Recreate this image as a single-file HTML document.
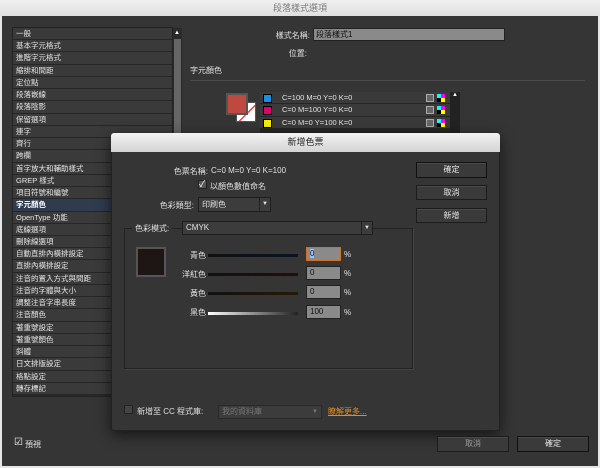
<!DOCTYPE html>
<html><head><meta charset="utf-8"><style>
*{margin:0;padding:0;box-sizing:border-box}
body{width:600px;height:468px;background:#e6e6e6;font-family:"Liberation Sans","Noto Sans CJK TC",sans-serif;font-size:8px;color:#e0e0e0;position:relative;overflow:hidden}
.a{position:absolute}
#win{left:2px;top:16px;width:596px;height:450px;background:#353535}
.list{left:12px;top:27px;width:161px;height:370px;background:#2a2a2a;border:1px solid #222}
.list div{height:12.24px;line-height:12px;padding-left:3px;border-bottom:1px solid #262626;background:#3a3a3a;color:#e6e6e6;font-size:7.5px;white-space:nowrap}
.list div.sel{background:#2f3b4f;color:#fff;font-weight:bold}
.btn{background:#3a3a3a;border:1px solid #1c1c1c;box-shadow:inset 0 1px 0 #4a4a4a;text-align:center;color:#e6e6e6;font-size:8px}
.r{text-align:right}
.row{height:12.3px;border-bottom:1px solid #262626;background:#3a3a3a;position:relative;font-size:7.5px;line-height:12px;padding-left:22px}
.row i{position:absolute;left:3px;top:2px;width:9px;height:9px;border:1px solid #000}
.row b{position:absolute;left:166px;top:2px;width:8px;height:8px;background:#666;border:1px solid #aaa}
.row u{position:absolute;left:177px;top:2px;width:8px;height:8px;background:conic-gradient(#f0f 0 25%,#ff0 0 50%,#000 0 75%,#0ff 0)}
.in{background:#8a8a8a;border:1px solid #222;color:#111}
.sl{height:3px}
</style></head><body>
<div class="a" style="left:0;top:0;width:600px;height:16px;background:linear-gradient(#f0f0f0,#e0e0e0);text-align:center;line-height:16px;color:#7a7a7a;font-size:9px">段落樣式選項</div>
<div class="a" id="win"></div>
<div class="a list">
<div>一般</div><div>基本字元格式</div><div>進階字元格式</div><div>縮排和間距</div><div>定位點</div><div>段落嵌線</div><div>段落陰影</div><div>保留選項</div><div>連字</div><div>齊行</div><div>跨欄</div><div>首字放大和輔助樣式</div><div>GREP 樣式</div><div>項目符號和編號</div><div class="sel">字元顏色</div><div>OpenType 功能</div><div>底線選項</div><div>刪除線選項</div><div>自動直排內橫排設定</div><div>直排內橫排設定</div><div>注音的置入方式與間距</div><div>注音的字體與大小</div><div>調整注音字串長度</div><div>注音顏色</div><div>著重號設定</div><div>著重號顏色</div><div>斜體</div><div>日文排版設定</div><div>格點設定</div><div>轉存標記</div>
</div>
<div class="a" style="left:173px;top:28px;width:9px;height:369px;background:#2a2a2a"><div style="margin:2px 1px;width:7px;height:6px;color:#fff;font-size:6px;line-height:6px">▲</div><div style="margin:3px 1px;width:7px;height:300px;background:#666"></div></div>

<div class="a r" style="left:240px;top:30px;width:70px">樣式名稱:</div>
<div class="a in" style="left:313px;top:28px;width:192px;height:13px;font-size:8px;line-height:11px;padding-left:2px">段落樣式1</div>
<div class="a r" style="left:240px;top:48px;width:67px">位置:</div>
<div class="a" style="left:190px;top:65px">字元顏色</div>
<div class="a" style="left:190px;top:80px;width:395px;height:1px;background:#4a4a4a"></div>
<div class="a" style="left:236px;top:102px;width:20px;height:20px;background:#fff;border:1px solid #555;overflow:hidden"><div style="position:absolute;left:-4px;top:9px;width:30px;height:1px;background:#e00;transform:rotate(-45deg)"></div></div>
<div class="a" style="left:226px;top:93px;width:22px;height:22px;background:#c0493f;border:2px solid #555"></div>
<div class="a" style="left:260px;top:92px;width:190px;height:41px;background:#262626">
<div class="row"><i style="background:#1a8fe6"></i>C=100 M=0 Y=0 K=0<b></b><u></u></div>
<div class="row"><i style="background:#e0006f"></i>C=0 M=100 Y=0 K=0<b></b><u></u></div>
<div class="row"><i style="background:#f7ec00"></i>C=0 M=0 Y=100 K=0<b></b><u></u></div>
</div>
<div class="a" style="left:450px;top:92px;width:10px;height:41px;background:#222;color:#fff;font-size:6px;text-align:center">▲</div>

<!-- dialog -->
<div class="a" style="left:111px;top:133px;width:389px;height:298px;background:#353535;border:1px solid #222;border-radius:3px;box-shadow:0 4px 14px rgba(0,0,0,.6)"></div>
<div class="a" style="left:111px;top:133px;width:389px;height:19px;background:linear-gradient(#f2f2f2,#d4d4d4);border-radius:3px 3px 0 0;text-align:center;line-height:19px;color:#222;font-size:9px">新增色票</div>
<div class="a r" style="left:120px;top:166px;width:88px">色票名稱:</div>
<div class="a" style="left:211px;top:166px">C=0 M=0 Y=0 K=100</div>
<div class="a" style="left:198px;top:180px;width:9px;height:9px;background:#555;border:1px solid #222;font-size:9px;line-height:7px;color:#fff">✓</div>
<div class="a" style="left:210px;top:181px">以顏色數值命名</div>
<div class="a r" style="left:120px;top:200px;width:74px">色彩類型:</div>
<div class="a" style="left:198px;top:197px;width:73px;height:15px;background:#3c3c3c;border:1px solid #1e1e1e;padding-left:3px;line-height:13px">印刷色<span style="position:absolute;right:0;top:0;width:11px;border-left:1px solid #222;text-align:center;font-size:6px">▼</span></div>
<div class="a btn" style="left:416px;top:162px;width:71px;height:16px;line-height:14px;border-color:#111">確定</div>
<div class="a btn" style="left:416px;top:185px;width:71px;height:15px;line-height:13px">取消</div>
<div class="a btn" style="left:416px;top:208px;width:71px;height:15px;line-height:13px">新增</div>
<div class="a" style="left:124px;top:228px;width:289px;height:141px;border:1px solid #222;box-shadow:1px 1px 0 #444"></div>
<div class="a" style="left:132px;top:223px;background:#353535;padding:0 3px">色彩模式:</div>
<div class="a" style="left:182px;top:221px;width:191px;height:14px;background:#3c3c3c;border:1px solid #1e1e1e;padding-left:3px;line-height:12px">CMYK<span style="position:absolute;right:0;top:0;width:11px;border-left:1px solid #222;text-align:center;font-size:6px">▼</span></div>
<div class="a" style="left:136px;top:247px;width:30px;height:30px;background:#1e1515;border:2px solid #555"></div>

<div class="a r" style="left:160px;top:250px;width:46px">青色</div>
<div class="a sl" style="left:208px;top:254px;width:90px;background:linear-gradient(90deg,#111,#0a1420)"></div>
<div class="a in" style="left:306px;top:247px;width:35px;height:14px;border:1px solid #d07020;padding-left:3px;line-height:12px"><span style="background:#9cc0ff">0</span></div>
<div class="a" style="left:344px;top:250px">%</div>
<div class="a r" style="left:160px;top:269px;width:46px">洋紅色</div>
<div class="a sl" style="left:208px;top:273px;width:90px;background:linear-gradient(90deg,#111,#2a0a0e)"></div>
<div class="a in" style="left:306px;top:266px;width:35px;height:14px;padding-left:3px;line-height:12px">0</div>
<div class="a" style="left:344px;top:269px">%</div>
<div class="a r" style="left:160px;top:288px;width:46px">黃色</div>
<div class="a sl" style="left:208px;top:292px;width:90px;background:linear-gradient(90deg,#111,#241a06)"></div>
<div class="a in" style="left:306px;top:285px;width:35px;height:14px;padding-left:3px;line-height:12px">0</div>
<div class="a" style="left:344px;top:288px">%</div>
<div class="a r" style="left:160px;top:307px;width:46px">黑色</div>
<div class="a sl" style="left:208px;top:312px;width:90px;background:linear-gradient(90deg,#fff,#222)"></div>
<div class="a in" style="left:306px;top:305px;width:35px;height:14px;padding-left:3px;line-height:12px">100</div>
<div class="a" style="left:344px;top:308px">%</div>

<div class="a" style="left:124px;top:405px;width:9px;height:9px;background:#444;border:1px solid #222"></div>
<div class="a" style="left:137px;top:406px">新增至 CC 程式庫:</div>
<div class="a" style="left:218px;top:405px;width:104px;height:14px;background:#3c3c3c;border:1px solid #2a2a2a;color:#777;padding-left:3px;line-height:12px">我的資料庫<span style="position:absolute;right:3px;font-size:6px">▼</span></div>
<div class="a" style="left:328px;top:406px;color:#e08a20;text-decoration:underline">瞭解更多...</div>

<div class="a" style="left:14px;top:437px;font-size:10px;color:#fff">☑</div>
<div class="a" style="left:25px;top:439px">預視</div>
<div class="a btn" style="left:437px;top:436px;width:72px;height:16px;line-height:14px;color:#999">取消</div>
<div class="a btn" style="left:517px;top:436px;width:72px;height:16px;line-height:14px;border-color:#111">確定</div>
</body></html>
